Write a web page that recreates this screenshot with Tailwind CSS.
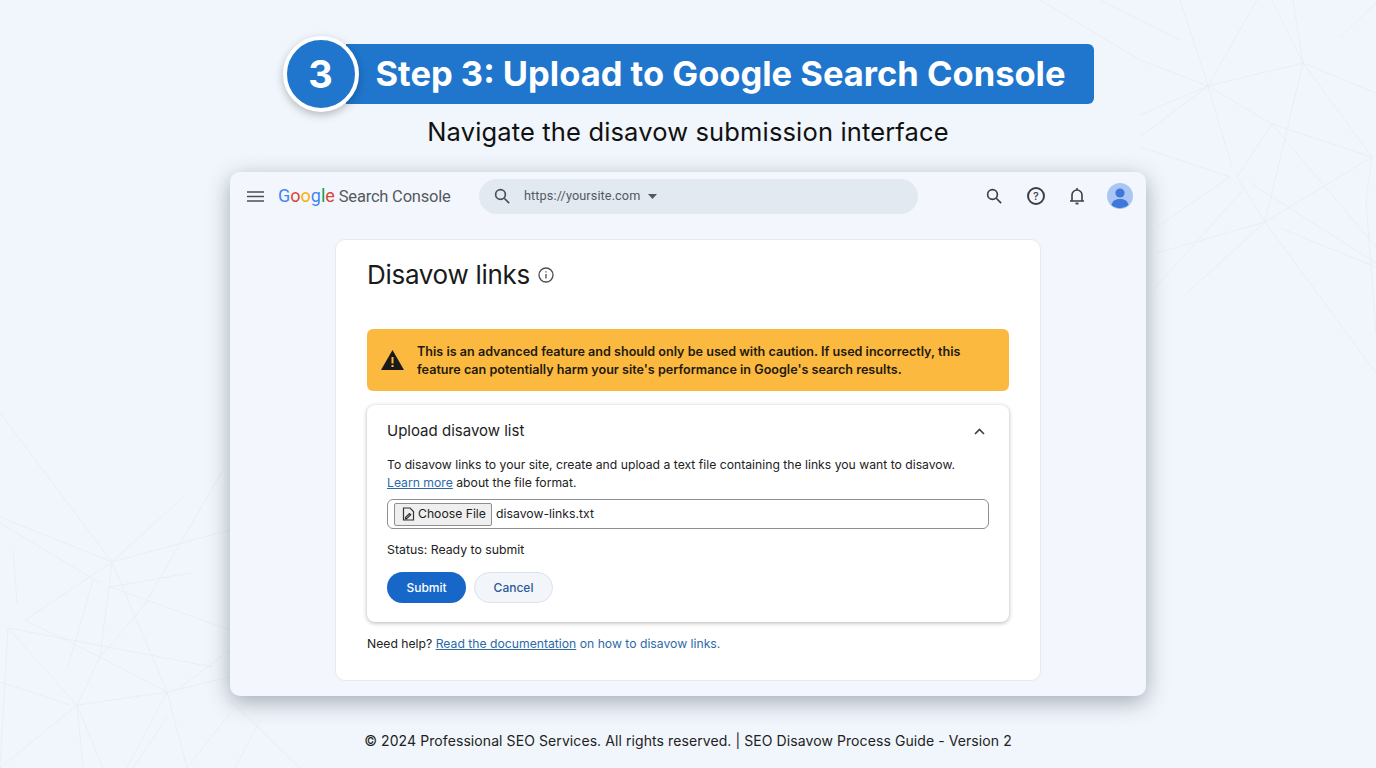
<!DOCTYPE html>
<html lang="en">
<head>
<meta charset="UTF-8">
<title>Step 3: Upload to Google Search Console</title>
<script src="https://cdn.jsdelivr.net/npm/@tailwindcss/browser@4"></script>
</head>
<body class="relative w-[1376px] h-[768px] overflow-hidden bg-[#f1f6fc] font-['Inter',sans-serif] text-[#111]">

<!-- background network lines -->
<svg class="absolute inset-0" width="1376" height="768" fill="none" stroke="#e6ebf0" stroke-width="0.7">
  <path d="M1180 0L1208 86L1232 167M1140 60L1208 86L1303 63L1376 93M1208 86L1257 0M1140 115L1208 86L1140 137M1208 86L1272 124L1372 157M1272 0L1303 63L1372 157M1293 0L1303 63L1265 222M1272 124L1237 177L1265 222L1376 373M1140 147L1230 177L1157 227M1272 124L1376 247M1265 222L1372 157M1157 253L1265 222L1187 293M1153 290L1243 190M1250 183L1376 263M1280 228L1376 267M1372 157L1366 200L1376 333M1340 37L1376 3M1100 0L1180 40M1040 0L1140 60"/>
  <path d="M0 413L112 562L0 517M112 562L230 530M112 562L183 497M112 562L25 620M112 562L100 657M112 562L167 692M0 523L100 583M110 587L230 630M110 587L190 573M8 628L77 705M8 628L213 667M8 628L0 768M13 550L17 603M77 705L100 657L143 607L223 470M77 705L167 692L230 677M77 705L0 768M77 705L83 768M77 705L103 768M0 682L70 705M100 657L167 692M167 692L127 768M167 692L187 768M25 620L100 657M167 717L133 768M230 713L187 768M67 670L93 580M177 690L230 650M230 700L300 768M260 720L235 768"/>
</svg>

<div class="relative flex flex-col items-center">
  <!-- step heading -->
  <div class="flex items-center h-[76px] mt-[36px] w-[811px]">
    <div class="relative z-10 flex items-center justify-center w-[76px] h-[76px] rounded-full bg-[#1f76cc] border-[4px] border-white shadow-[0_3px_8px_rgba(0,0,0,0.25)] text-white text-[38px] font-bold">3</div>
    <div class="flex items-center h-[60px] w-[748px] -ml-[13px] pl-[30px] bg-[#1f76cc] rounded-r-[6px] text-white text-[34.5px] font-bold whitespace-nowrap">Step 3: Upload to Google Search Console</div>
  </div>
  <p class="mt-[1px] text-[25.500px] leading-[38px] tracking-[0.15px]">Navigate the disavow submission interface</p>

  <!-- console window -->
  <div class="mt-[21px] w-[916px] h-[524px] rounded-[10px] bg-[#f3f7fd] shadow-[0_6px_22px_rgba(40,50,65,0.38)]">
    <div class="flex items-center h-[48px] pl-[17px] pr-[13px]">
      <svg width="17" height="13" viewBox="0 0 17 13" stroke="#4a4f55" stroke-width="1.600"><path d="M0 2H17M0 6.500H17M0 11H17"/></svg>
      <div class="ml-[14px] w-[174px] text-[16.500px] tracking-[-0.2px] text-[#55595e] font-['Roboto',sans-serif] whitespace-nowrap"><span class="text-[18px] tracking-[0px]"><span class="text-[#4285f4]">G</span><span class="text-[#db4437]">o</span><span class="text-[#f4b400]">o</span><span class="text-[#4285f4]">g</span><span class="text-[#0f9d58]">l</span><span class="text-[#db4437]">e</span></span> Search Console</div>
      <div class="flex items-center ml-[27px] w-[439px] h-[35px] rounded-full bg-[#e2e9f1] pl-[14px]">
        <svg width="18" height="18" viewBox="0 0 24 24" fill="none" stroke="#4a4f55" stroke-width="2.200"><circle cx="10" cy="10" r="6.500"/><path d="M15 15l6.500 6.500"/></svg>
        <span class="ml-[13px] text-[12.700px] text-[#55595e] font-['Roboto',sans-serif] tracking-[0.1px]">https://yoursite.com</span>
        <svg class="ml-[8px]" width="9" height="5" viewBox="0 0 9 5" fill="#55595e"><path d="M0 0H9L4.500 5Z"/></svg>
      </div>
      <svg class="ml-[67px]" width="18" height="18" viewBox="0 0 24 24" fill="none" stroke="#3c4043" stroke-width="2.200"><circle cx="10" cy="10" r="6.500"/><path d="M15 15l6.500 6.500"/></svg>
      <div class="ml-[24px] flex items-center justify-center w-[18px] h-[18px] rounded-full border-[2px] border-[#3c4043] text-[11px] font-medium text-[#3c4043]">?</div>
      <svg class="ml-[24px]" width="16" height="18" viewBox="0 0 16 18" fill="none" stroke="#3c4043" stroke-width="1.600"><path d="M1 14h14M3 14V8a5 5 0 0 1 10 0v6M8 1v2"/><path d="M6.500 16.500h3" stroke-width="1.800"/></svg>
      <svg class="ml-[22px]" width="26" height="26" viewBox="0 0 26 26"><circle cx="13" cy="13" r="13" fill="#a9c7f2"/><circle cx="13" cy="10" r="4.600" fill="#3f78d8"/><path d="M4.500 22c1-4.500 4.500-6 8.500-6s7.500 1.500 8.500 6a13 13 0 0 1-17 0Z" fill="#3f78d8"/></svg>
    </div>

    <!-- disavow card -->
    <div class="mt-[19px] ml-[105px] w-[706px] h-[442px] rounded-[10px] bg-white border border-[#e6e9ee] px-[31px] pt-[18px]">
      <div class="flex items-center h-[34px]">
        <h1 class="text-[26px] leading-[34px] tracking-[-0.3px] text-[#1a1a1a]">Disavow links</h1>
        <svg class="ml-[8px]" width="16" height="16" viewBox="0 0 16 16" fill="none" stroke="#4a4f55" stroke-width="1.300"><circle cx="8" cy="8" r="7"/><path d="M8 7v4.500M8 4.200v1.300"/></svg>
      </div>

      <div class="flex items-center mt-[37px] w-[642px] h-[62px] rounded-[6px] bg-[#fbb93f] pl-[14px]">
        <svg width="23" height="20" viewBox="0 0 23 20"><path d="M11.500 0L23 20H0Z" fill="#1a1a1a"/><path d="M10.500 7h2v6.500h-2zM10.500 15h2v2h-2z" fill="#fbb93f"/></svg>
        <p class="ml-[13px] pt-[1px] text-[12.600px] leading-[18px] font-semibold text-[#1f1a10]">This is an advanced feature and should only be used with caution. If used incorrectly, this<br>feature can potentially harm your site's performance in Google's search results.</p>
      </div>

      <div class="mt-[14px] w-[642px] h-[217px] rounded-[8px] bg-white shadow-[0_1px_4px_rgba(0,0,0,0.3)] px-[20px] pt-[15px]">
        <div class="flex items-center justify-between h-[22px]">
          <h2 class="text-[15px] text-[#222]">Upload disavow list</h2>
          <svg class="mr-[4px]" width="11" height="7" viewBox="0 0 11 7" fill="none" stroke="#3c4043" stroke-width="1.600"><path d="M1 6l4.500-4.500L10 6"/></svg>
        </div>
        <p class="mt-[14px] text-[12.200px] leading-[18px] text-[#222]">To disavow links to your site, create and upload a text file containing the links you want to disavow.<br><a class="text-[#2b6aa8] underline">Learn more</a> about the file format.</p>
        <div class="flex items-center mt-[7px] w-[602px] h-[30px] rounded-[6px] border border-[#8d8f93] pl-[6px]">
          <div class="flex items-center h-[23px] w-[98px] rounded-[2px] border border-[#8f8f8f] bg-[#efefef] pl-[7px] text-[12.200px] text-[#222]">
            <svg width="13" height="14" viewBox="0 0 13 14" fill="none" stroke="#333" stroke-width="1.200"><path d="M1.500 1h6.500l3.500 3.500V13h-10ZM3.500 10.500l4-4 1.200 1.200-4 4h-1.200Z"/></svg>
            <span class="ml-[3px]">Choose File</span>
          </div>
          <span class="ml-[4px] text-[12.250px] text-[#222]">disavow-links.txt</span>
        </div>
        <p class="mt-[12px] text-[12.300px] leading-[18px] text-[#222]">Status: Ready to submit</p>
        <div class="flex items-center mt-[13px]">
          <div class="flex items-center justify-center w-[79px] h-[31px] rounded-full bg-[#1667c8] text-white text-[12px] font-medium">Submit</div>
          <div class="flex items-center justify-center ml-[8px] w-[79px] h-[31px] rounded-full bg-[#f2f6fb] border border-[#dde2e8] text-[#2b5a94] text-[12px] font-medium">Cancel</div>
        </div>
      </div>

      <p class="mt-[13px] text-[12.200px] leading-[18px] text-[#222]">Need help? <a class="text-[#2b6aa8] underline">Read the documentation</a> <span class="text-[#2b6aa8]">on how to disavow links.</span></p>
    </div>
  </div>

  <p class="mt-[35px] text-[14px] leading-[20px] text-[#222] tracking-[0.085px]">© 2024 Professional SEO Services. All rights reserved. | SEO Disavow Process Guide - Version 2</p>
</div>
</body>
</html>
